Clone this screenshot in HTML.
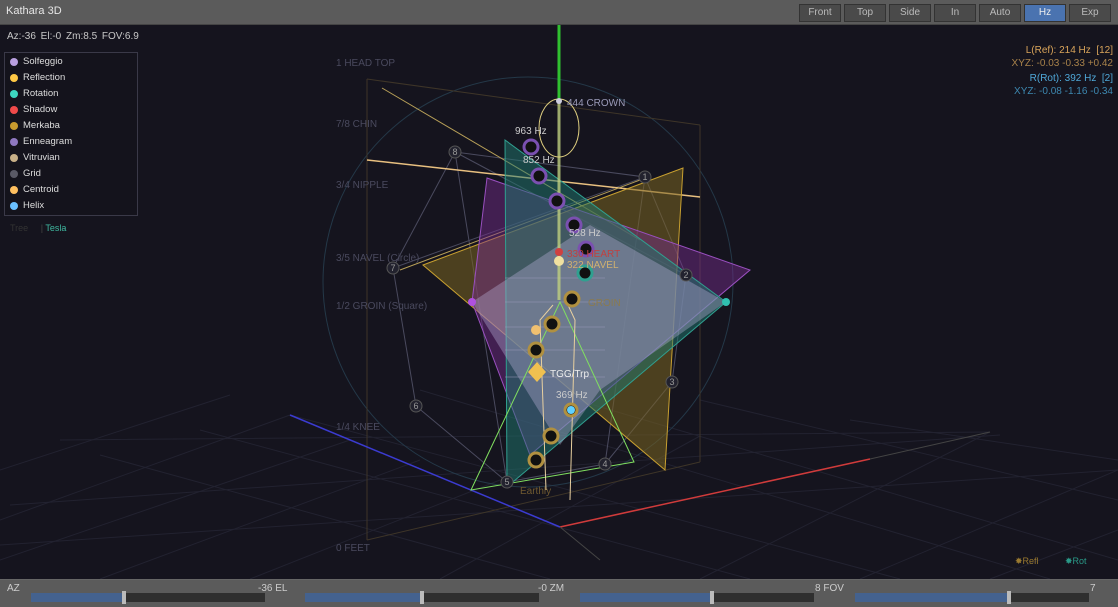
<!DOCTYPE html>
<html><head><meta charset="utf-8"><style>
*{margin:0;padding:0;box-sizing:border-box}
body{width:1118px;height:607px;background:#15141e;overflow:hidden;font-family:"Liberation Sans",sans-serif;position:relative}
.top{position:absolute;left:0;top:0;width:1118px;height:25px;background:#5b5b5b;border-bottom:1px solid #444}
.top .t{position:absolute;left:6px;top:5px;color:#e6e6e6;font-size:11px}
.btn{position:absolute;top:4px;height:18px;width:42px;background:#4a4a4a;border:1px solid #333;color:#bbb;font-size:10px;text-align:center;line-height:16px}
.btn.on{background:#4a73b0;color:#eee}
.info{position:absolute;left:7px;top:31px;color:#c8c8c8;font-size:10px;word-spacing:2px}
.leg{position:absolute;left:4px;top:52px;width:134px;height:164px;border:1px solid #3a3948;background:#14131c;padding-top:1px}
.leg div{height:16px;font-size:9.5px;color:#ddd;padding-left:18px;position:relative;line-height:16px}
.leg div i{position:absolute;left:5px;top:4px;width:8px;height:8px;border-radius:50%}
.tabs{position:absolute;left:10px;top:223px;font-size:9px;color:#333;}
.rt{position:absolute;right:5px;text-align:right;font-size:10px}
.bot{position:absolute;left:0;top:579px;width:1118px;height:28px;background:#5b5b5b;border-top:1px solid #666}
.lab{position:absolute;top:3px;font-size:10px;color:#ccc}
.sl{position:absolute;top:13px;height:9px;background:#2f2f2f;width:234px}
.sl b{position:absolute;left:0;top:0;height:9px;background:#44628f}
.sl s{position:absolute;top:-2px;width:4px;height:13px;background:#bbb}
svg{position:absolute;left:0;top:0}
</style></head><body>
<svg width="1118" height="607" viewBox="0 0 1118 607">
<g stroke="#222230" stroke-width="1" fill="none">
<path d="M0 520 L290 415 M0 560 L350 440 M100 579 L420 460 M250 579 L500 480 M440 579 L700 436 M0 470 L230 395 M700 579 L990 432 M860 579 L1118 470 M990 579 L1118 530"/>
<path d="M290 415 L900 579 M200 430 L750 579 M100 455 L550 579 M420 390 L1050 579 M560 395 L1118 560 M700 400 L1118 500 M850 420 L1118 460 M10 505 L1000 435 M0 545 L1118 470 M60 440 L990 432"/>
</g>
<circle cx="528" cy="282" r="205" fill="none" stroke="#243848" stroke-width="1"/>
<path d="M367 79 V540 M367 540 L700 462 M700 125 V462 M367 79 L700 125" stroke="#3e3528" fill="none"/>
<line x1="290" y1="415" x2="560" y2="527" stroke="#3b3bd0" stroke-width="1.5"/>
<line x1="560" y1="527" x2="870" y2="459" stroke="#d03b3b" stroke-width="1.5"/>
<line x1="870" y1="459" x2="990" y2="432" stroke="#444"/>
<line x1="560" y1="527" x2="600" y2="560" stroke="#444"/>
<g fill="none" stroke="#4a4a5e" stroke-width="1">
<path d="M455 152 L393 268 L416 406 M455 152 L645 177 L686 275 L672 382 L605 464 L507 482 L416 406 M455 152 L686 275 M393 268 L645 177 M455 152 L507 482 M645 177 L605 464"/>
</g>
<path d="M367 160 L700 197" stroke="#e8c080" stroke-width="1.5"/>
<path d="M382 88 L640 240 M400 270 L640 180" stroke="#b8a058" stroke-width="1"/>
<polygon points="423,265 683,168 665,470" fill="#7a6520" fill-opacity=".55" stroke="#c8a030"/>
<polygon points="487,178 750,270 530,455 472,302" fill="#7a2d90" fill-opacity=".45" stroke="#9a50c0"/>
<polygon points="505,140 726,302 507,487" fill="#1f7a70" fill-opacity=".5" stroke="#30a090"/>
<polygon points="472,302 590,225 726,302 600,390 560,445" fill="#b8b0d8" fill-opacity=".38"/>
<g fill="none" stroke="#9a98b8" stroke-width=".8" opacity=".7">
<path d="M505 278 h100 M505 302 h100 M505 327 h100 M505 350 h100 M505 377 h100"/>
</g>
<path d="M471 490 L560 302 L634 462 Z" fill="none" stroke="#80e060" stroke-width="1"/>
<line x1="559" y1="25" x2="559" y2="100" stroke="#30c030" stroke-width="3"/>
<line x1="559" y1="100" x2="559" y2="300" stroke="#c0d080" stroke-width="3" opacity=".8"/>
<path d="M553 305 L540 320 L546 490 M568 305 L575 320 L570 500" stroke="#e8d0a0" fill="none"/>
<ellipse cx="559" cy="128" rx="20" ry="29" fill="none" stroke="#e0d080"/>
<g stroke-width="3" fill="#111">
<circle cx="531" cy="147" r="7" stroke="#7a50b0"/>
<circle cx="539" cy="176" r="7" stroke="#7a50b0"/>
<circle cx="557" cy="201" r="7" stroke="#7a50b0"/>
<circle cx="574" cy="225" r="7" stroke="#7a50b0"/>
<circle cx="586" cy="249" r="7" stroke="#7a50b0"/>
<circle cx="585" cy="273" r="7" stroke="#30a090"/>
<circle cx="572" cy="299" r="7" stroke="#b09040"/>
<circle cx="552" cy="324" r="7" stroke="#b09040"/>
<circle cx="536" cy="350" r="7" stroke="#b09040"/>
<circle cx="551" cy="436" r="7" stroke="#b09040"/>
<circle cx="536" cy="460" r="7" stroke="#b09040"/>
<circle cx="571" cy="410" r="6" stroke="#b09040"/>
</g>
<circle cx="559" cy="261" r="5" fill="#f0e0a0"/>
<circle cx="559" cy="252" r="4" fill="#d04040"/>
<circle cx="536" cy="330" r="5" fill="#f0c070"/>
<circle cx="571" cy="410" r="4" fill="#60d0ff"/>
<circle cx="559" cy="101" r="3" fill="#ccd"/>
<circle cx="472" cy="302" r="4" fill="#b050e0"/>
<circle cx="726" cy="302" r="4" fill="#30c0b0"/>
<polygon points="537,362 546,372 537,382 528,372" fill="#f0c050"/>
<g fill="#22222e" stroke="#555">
<circle cx="455" cy="152" r="6"/><circle cx="645" cy="177" r="6"/><circle cx="686" cy="275" r="6"/><circle cx="672" cy="382" r="6"/><circle cx="605" cy="464" r="6"/><circle cx="507" cy="482" r="6"/><circle cx="416" cy="406" r="6"/><circle cx="393" cy="268" r="6"/>
</g>
<g fill="#999" font-size="9" text-anchor="middle" font-family="Liberation Sans">
<text x="455" y="155">8</text><text x="645" y="180">1</text><text x="686" y="278">2</text><text x="672" y="385">3</text><text x="605" y="467">4</text><text x="507" y="485">5</text><text x="416" y="409">6</text><text x="393" y="271">7</text>
</g>
<g font-size="10" font-family="Liberation Sans" fill="#4a4a5e">
<text x="336" y="66">1 HEAD TOP</text><text x="336" y="127">7/8 CHIN</text><text x="336" y="188">3/4 NIPPLE</text><text x="336" y="261">3/5 NAVEL (Circle)</text><text x="336" y="309">1/2 GROIN (Square)</text><text x="336" y="430">1/4 KNEE</text><text x="336" y="551">0 FEET</text>
</g>
<g font-size="10" font-family="Liberation Sans">
<text x="567" y="106" fill="#9a9ab8">444 CROWN</text>
<text x="515" y="134" fill="#ccc">963 Hz</text>
<text x="523" y="163" fill="#ccc">852 Hz</text>
<text x="569" y="236" fill="#ccc">528 Hz</text>
<text x="567" y="257" fill="#c04040">330 HEART</text>
<text x="567" y="268" fill="#d0b070">322 NAVEL</text>
<text x="588" y="306" fill="#8a7a50">GROIN</text>
<text x="550" y="377" fill="#eee">TGG/Trp</text>
<text x="556" y="398" fill="#ccc">369 Hz</text>
<text x="520" y="494" fill="#705a30">Earthly</text>
</g>
</svg>
<div class="top"><span class="t">Kathara 3D</span>
<div class="btn" style="left:799px">Front</div><div class="btn" style="left:844px">Top</div><div class="btn" style="left:889px">Side</div><div class="btn" style="left:934px">In</div><div class="btn" style="left:979px">Auto</div><div class="btn on" style="left:1024px">Hz</div><div class="btn" style="left:1069px">Exp</div></div>
<div class="info">Az:-36 El:-0 Zm:8.5 FOV:6.9</div>
<div class="leg">
<div><i style="background:#b9a0e0"></i>Solfeggio</div>
<div><i style="background:#ffc845"></i>Reflection</div>
<div><i style="background:#3dd6c0"></i>Rotation</div>
<div><i style="background:#f04a4a"></i>Shadow</div>
<div><i style="background:#c89a2e"></i>Merkaba</div>
<div><i style="background:#8f78c0"></i>Enneagram</div>
<div><i style="background:#c8b088"></i>Vitruvian</div>
<div><i style="background:#5a5a66"></i>Grid</div>
<div><i style="background:#ffc060"></i>Centroid</div>
<div><i style="background:#6ac0ff"></i>Helix</div>
</div>
<div class="tabs">Tree &nbsp; &nbsp; <span style="color:#444">|</span> <span style="color:#3fb8a0">Tesla</span></div>
<div class="rt" style="top:45px;color:#d9a45a">L(Ref): 214 Hz &nbsp;[12]</div>
<div class="rt" style="top:58px;color:#a8824a">XYZ: -0.03 -0.33 +0.42</div>
<div class="rt" style="top:73px;color:#4fa8d8">R(Rot): 392 Hz &nbsp;[2]</div>
<div class="rt" style="top:86px;color:#3d88b0">XYZ: -0.08 -1.16 -0.34</div>
<div style="position:absolute;left:1015px;top:556px;font-size:9px;color:#9a7a30">✸Refl</div>
<div style="position:absolute;left:1065px;top:556px;font-size:9px;color:#2a9a88">✸Rot</div>
<div class="bot">
<span class="lab" style="left:7px">AZ</span><span class="lab" style="left:258px">-36 EL</span>
<span class="lab" style="left:538px">-0 ZM</span><span class="lab" style="left:815px">8 FOV</span><span class="lab" style="left:1090px">7</span>
<div class="sl" style="left:31px"><b style="width:93px"></b><s style="left:91px"></s></div>
<div class="sl" style="left:305px"><b style="width:117px"></b><s style="left:115px"></s></div>
<div class="sl" style="left:580px"><b style="width:132px"></b><s style="left:130px"></s></div>
<div class="sl" style="left:855px"><b style="width:154px"></b><s style="left:152px"></s></div>
</div>
</body></html>
